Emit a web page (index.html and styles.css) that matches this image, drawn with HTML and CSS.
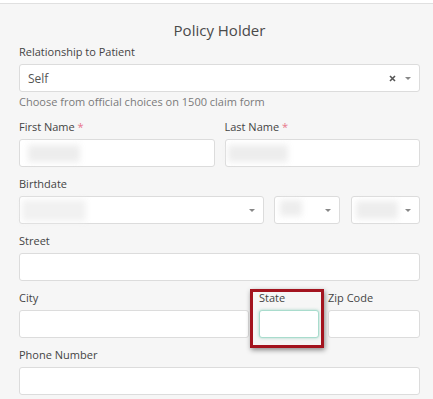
FILE: index.html
```html
<!DOCTYPE html>
<html lang="en">
<head>
    <meta charset="UTF-8">
    <meta name="viewport" content="width=device-width, initial-scale=1.0">
    <title>Policy Holder</title>
    <link rel="stylesheet" href="styles.css">
</head>
<body>

<div class="page">
    <h2 class="title">Policy Holder</h2>

    <div class="field">
        <label>Relationship to Patient</label>
        <div class="box select">
            <span class="value">Self</span>
            <svg class="clear" width="7" height="7" viewBox="0 0 7 7"><path d="M1 1L6 6M6 1L1 6" stroke="#555" stroke-width="1.6"/></svg>
            <span class="caret"></span>
        </div>
        <p class="help">Choose from official choices on 1500 claim form</p>
    </div>

    <div class="row two">
        <div class="field">
            <label>First Name <span class="req">*</span></label>
            <div class="box"><span class="blur blur-first"></span></div>
        </div>
        <div class="field">
            <label>Last Name <span class="req">*</span></label>
            <div class="box"><span class="blur blur-last"></span></div>
        </div>
    </div>

    <div class="field">
        <label>Birthdate</label>
        <div class="row date">
            <div class="box select"><span class="blur blur-day"></span><span class="caret"></span></div>
            <div class="box select"><span class="blur blur-month"></span><span class="caret"></span></div>
            <div class="box select"><span class="blur blur-year"></span><span class="caret"></span></div>
        </div>
    </div>

    <div class="field">
        <label>Street</label>
        <div class="box"></div>
    </div>

    <div class="row address">
        <div class="field">
            <label>City</label>
            <div class="box"></div>
        </div>
        <div class="field state">
            <label>State</label>
            <div class="box focus"></div>
            <div class="marker"></div>
        </div>
        <div class="field">
            <label>Zip Code</label>
            <div class="box"></div>
        </div>
    </div>

    <div class="field">
        <label>Phone Number</label>
        <div class="box"></div>
    </div>
</div>

</body>
</html>
```

FILE: styles.css
```css
html, body {
    height: 100%;
}
body {
    margin: 0;
    padding-top: 3px;
    box-sizing: border-box;
    background: #fff;
    font-family: 'Open Sans', 'Liberation Sans', sans-serif;
    color: #444;
    overflow: hidden;
}
.page {
    height: 100%;
    box-sizing: border-box;
    border-top: 1px solid #e0e0e0;
    background: #f6f6f6;
    padding: 16px 13px 0 19px;
}
.title {
    margin: 0 0 4px;
    font-size: 15px;
    line-height: 20px;
    font-weight: 400;
    text-align: center;
    color: #4a4a4a;
}
.field {
    margin-bottom: 9px;
}
.field label {
    display: block;
    font-size: 11px;
    line-height: 16px;
    margin-bottom: 4px;
    color: #444;
}
.req {
    color: #e8758a;
}
.box {
    position: relative;
    height: 28px;
    box-sizing: border-box;
    background: #fff;
    border: 1px solid #dcdcdc;
    border-radius: 3px;
}
.select .value {
    position: absolute;
    left: 8px;
    top: 5px;
    font-size: 12px;
    color: #555;
}
.clear {
    position: absolute;
    right: 23px;
    top: 10px;
}
.caret {
    position: absolute;
    right: 8px;
    top: 12px;
    border-left: 3px solid transparent;
    border-right: 3px solid transparent;
    border-top: 3px solid #888;
}
.help {
    margin: 2px 0 0;
    font-size: 11px;
    line-height: 16px;
    color: #7a7a7a;
}
.row {
    display: flex;
}
.two {
    gap: 10px;
}
.two .field {
    flex: 1;
}
.date {
    gap: 10px;
}
.date .box:nth-child(1) { width: 246px; }
.date .box:nth-child(2) { width: 67px; }
.date .box:nth-child(3) { width: 69px; margin-left: 1px; }
.address .field:nth-child(1) { width: 230px; }
.address .field:nth-child(2) { width: 60px; margin-left: 10px; }
.address .field:nth-child(3) { width: 92px; margin-left: 9px; }
.state {
    position: relative;
}
.focus {
    border-color: #a9dccd;
    box-shadow: 0 0 3px rgba(80, 180, 150, 0.5);
}
.marker {
    position: absolute;
    left: -9px;
    top: -1px;
    width: 74px;
    height: 59px;
    box-sizing: border-box;
    border: 3px solid #a3141f;
    box-shadow: 1px 2px 5px rgba(0, 0, 0, 0.45);
}
.blur {
    position: absolute;
    background: #ededed;
    filter: blur(3px);
}
.blur-first { left: 8px; top: 5px; width: 52px; height: 17px; }
.blur-last { left: 2px; top: 5px; width: 60px; height: 17px; }
.blur-day { left: 2px; top: 3px; width: 64px; height: 21px; background: #f1f1f1; }
.blur-month { left: 5px; top: 3px; width: 22px; height: 16px; }
.blur-year { left: 4px; top: 4px; width: 42px; height: 18px; }
```
